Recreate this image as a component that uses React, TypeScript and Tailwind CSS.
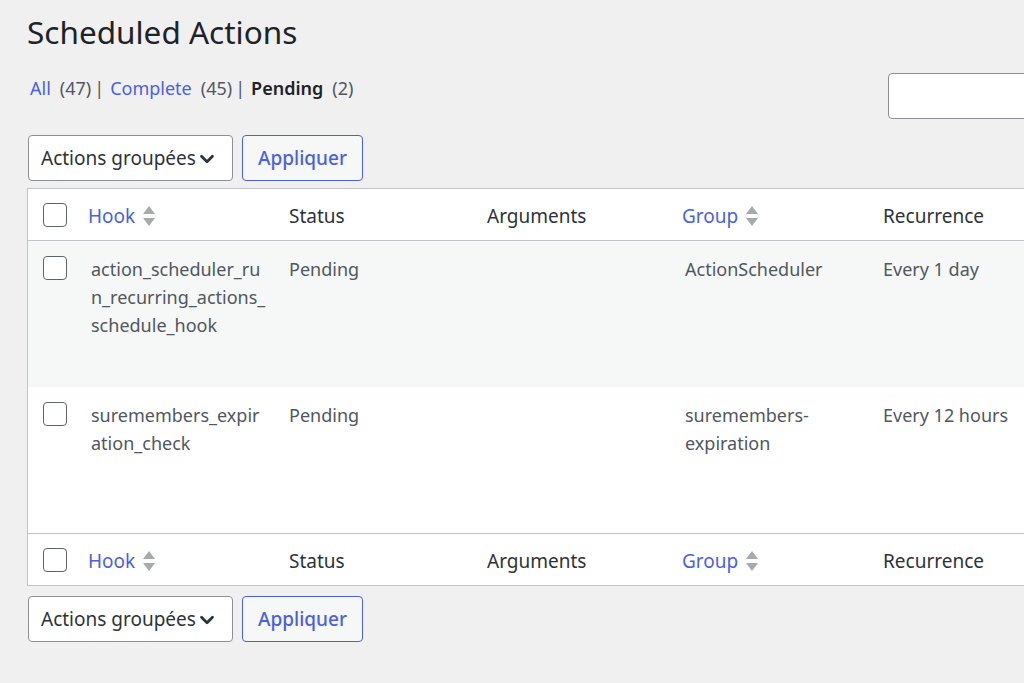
import { ChevronDown } from 'lucide-react';

const LINK = 'text-[#4a5fe6]';

function SortIcon() {
  return (
    <svg width="14" height="24" viewBox="0 0 14 24" className="ml-[7px] shrink-0" aria-hidden>
      <path d="M7 2 L13 10 L1 10 Z" fill="#a7aaad" />
      <path d="M7 22 L13 14 L1 14 Z" fill="#a7aaad" />
    </svg>
  );
}

function Checkbox() {
  return <span className="block h-[24px] w-[24px] rounded-[4px] border-[1.5px] border-[#5f6469] bg-white" />;
}

function BulkActions() {
  return (
    <div className="flex gap-[9px]">
      <div className="flex h-[46px] w-[205px] items-center justify-between rounded-[4px] border border-[#8c8f94] bg-white pr-[14px] pl-[12px] text-[19px] text-[#2c3338]">
        <span>Actions groupées</span>
        <ChevronDown size={22} strokeWidth={3} className="mt-[1px] -ml-2" />
      </div>
      <button
        type="button"
        className={`h-[46px] w-[121px] rounded-[4px] border border-[#4a5fe6] bg-[#f6f7f7] text-[19px] font-medium ${LINK}`}
      >
        Appliquer
      </button>
    </div>
  );
}

const COLS = 'grid grid-cols-[50px_201px_198px_195px_201px_1fr]';

function HeaderRow({ top }: { top?: boolean }) {
  return (
    <div
      className={`${COLS} h-[52px] items-center bg-white text-[19px] text-[#2c3338] ${
        top ? 'border-b border-[#c3c4c7]' : 'border-t border-[#c3c4c7]'
      }`}
    >
      <div className="pl-[15px]">
        <Checkbox />
      </div>
      <div className={`flex items-center pt-[3px] pl-[10px] ${LINK}`}>
        Hook
        <SortIcon />
      </div>
      <div className="pt-[3px] pl-[10px]">Status</div>
      <div className="pt-[3px] pl-[10px]">Arguments</div>
      <div className={`flex items-center pt-[3px] pl-[10px] ${LINK}`}>
        Group
        <SortIcon />
      </div>
      <div className="pt-[3px] pl-[10px]">Recurrence</div>
    </div>
  );
}

type Row = { hook: string[]; status: string; group: string[]; recurrence: string };

const ROWS: Row[] = [
  {
    hook: ['action_scheduler_ru', 'n_recurring_actions_', 'schedule_hook'],
    status: 'Pending',
    group: ['ActionScheduler'],
    recurrence: 'Every 1 day',
  },
  {
    hook: ['suremembers_expir', 'ation_check'],
    status: 'Pending',
    group: ['suremembers-', 'expiration'],
    recurrence: 'Every 12 hours',
  },
];

function Lines({ lines }: { lines: string[] }) {
  return (
    <>
      {lines.map((l) => (
        <div key={l}>{l}</div>
      ))}
    </>
  );
}

export default function App() {
  return (
    <div
      className="h-[683px] w-[1024px] overflow-hidden bg-[#f0f0f1] pl-[27px]"
      style={{ fontFamily: '"Noto Sans", "Open Sans", sans-serif' }}
    >
      <h1 className="mt-[10px] text-[31.5px] leading-[44px] text-[#1d2327]">Scheduled Actions</h1>

      <div className="mt-[19px] flex items-start justify-between">
        <div className="mt-[1px] flex items-center pl-[3px] text-[18px] leading-[28px] text-[#50575e]">
          <span className={LINK}>All</span>
          <span className="ml-[9px]">(47)</span>
          <span className="mr-[6px] ml-[3px]">|</span>
          <span className={LINK}>Complete</span>
          <span className="ml-[9px]">(45)</span>
          <span className="mr-[6px] ml-[3px]">|</span>
          <span className="font-semibold text-[#1d2327]">Pending</span>
          <span className="ml-[9px]">(2)</span>
        </div>
        <div className="h-[46px] w-[200px] shrink-0 translate-x-[64px] rounded-[4px] border border-[#8c8f94] bg-white" />
      </div>

      <div className="mt-[16px] pl-[1px]">
        <BulkActions />
      </div>

      <div className="mt-[7px] w-[1100px] border border-[#c3c4c7] bg-white">
        <HeaderRow top />
        {ROWS.map((r, i) => (
          <div
            key={r.hook[0]}
            className={`${COLS} h-[146px] items-start pt-[14px] text-[18px] leading-[28px] text-[#50575e] ${
              i === 0 ? 'bg-[#f6f7f7]' : 'bg-white'
            }`}
          >
            <div className="pt-[1px] pl-[15px]">
              <Checkbox />
            </div>
            <div className="pl-[13px]">
              <Lines lines={r.hook} />
            </div>
            <div className="pl-[10px]">{r.status}</div>
            <div />
            <div className="pl-[13px]">
              <Lines lines={r.group} />
            </div>
            <div className="pl-[10px]">{r.recurrence}</div>
          </div>
        ))}
        <HeaderRow />
      </div>

      <div className="mt-[10px] pl-[1px]">
        <BulkActions />
      </div>
    </div>
  );
}
